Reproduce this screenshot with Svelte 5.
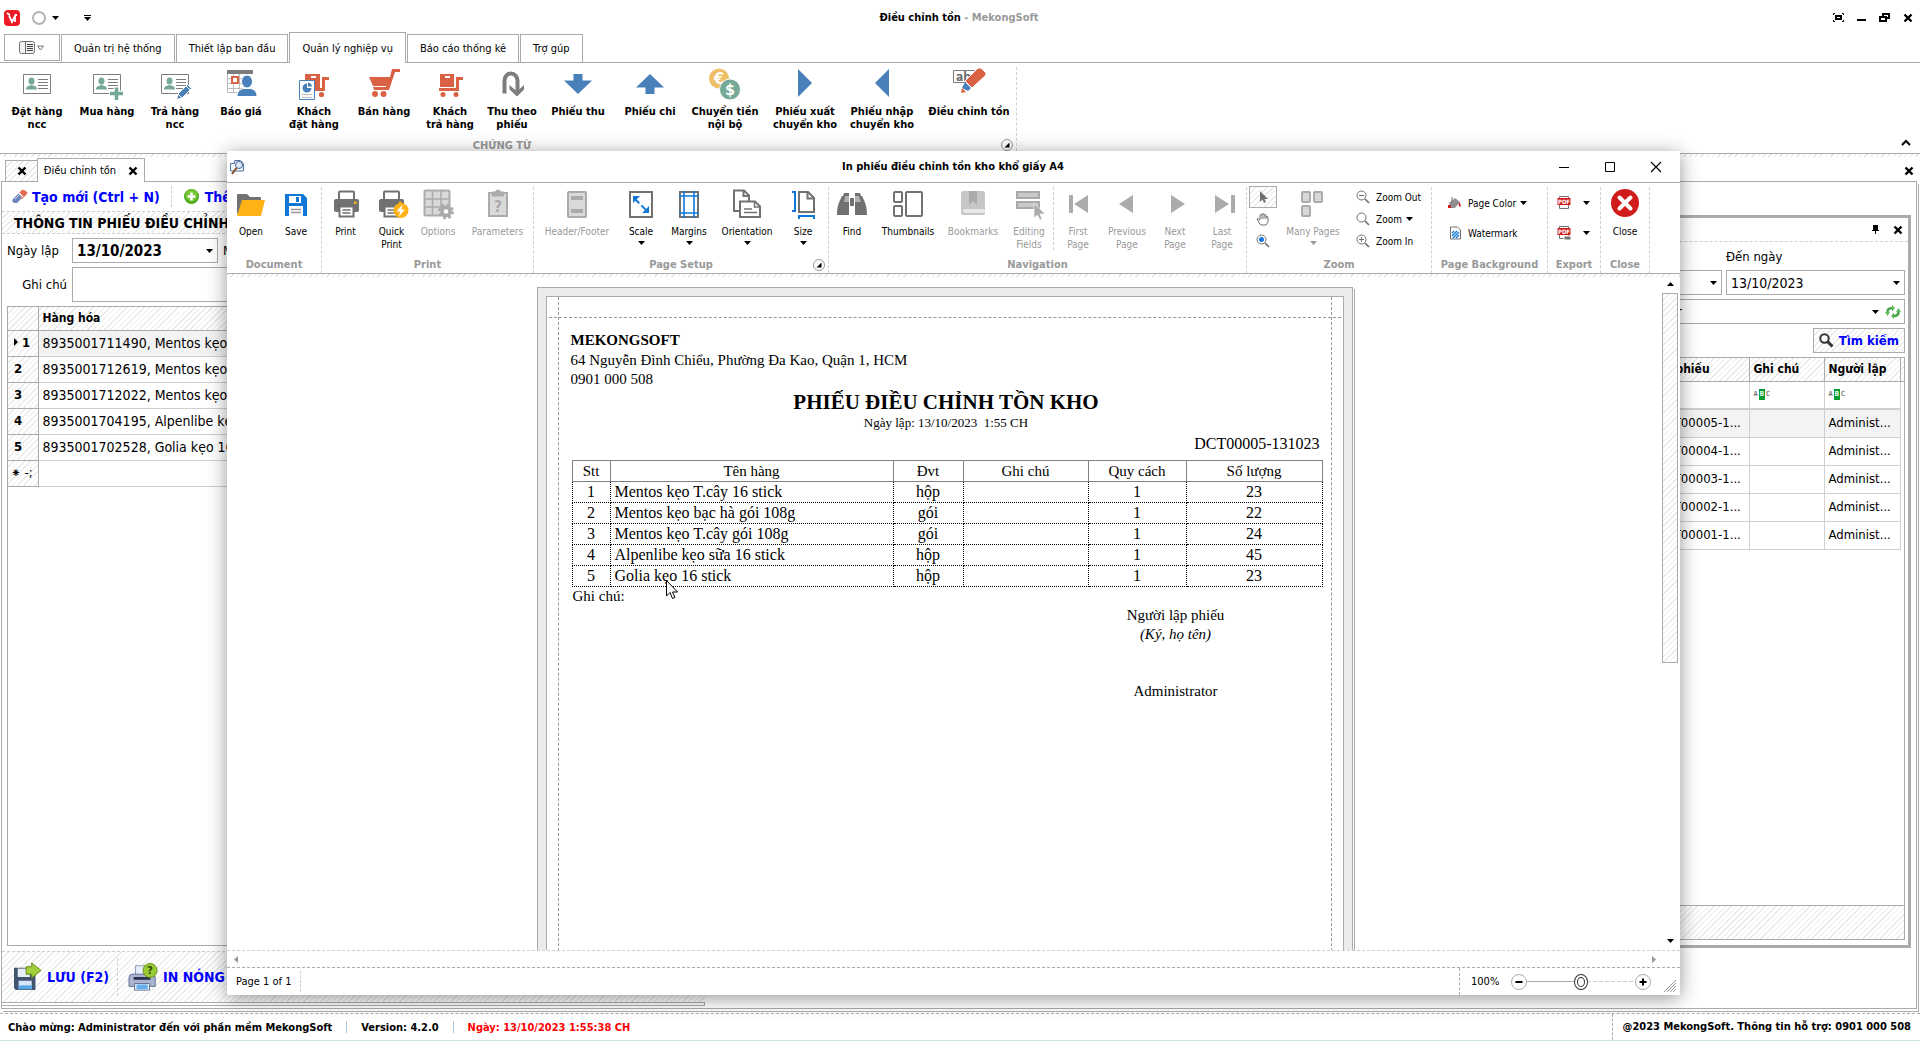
<script>
  const menuTabs = ['Quản trị hệ thống', 'Thiết lập ban đầu', 'Quản lý nghiệp vụ', 'Báo cáo thống kê', 'Trợ gúp'];
  const commands = [
    { icon: 'card', label: 'Đặt hàng\nncc' },
    { icon: 'cardPlus', label: 'Mua hàng' },
    { icon: 'cardPen', label: 'Trả hàng\nncc' },
    { icon: 'quote', label: 'Báo giá' },
    { icon: 'order', label: 'Khách\nđặt hàng' },
    { icon: 'cart', label: 'Bán hàng' },
    { icon: 'trolley', label: 'Khách\ntrả hàng' },
    { icon: 'uturn', label: 'Thu theo\nphiếu' },
    { icon: 'down', label: 'Phiếu thu' },
    { icon: 'up', label: 'Phiếu chi' },
    { icon: 'coins', label: 'Chuyển tiền\nnội bộ' },
    { icon: 'right', label: 'Phiếu xuất\nchuyển kho' },
    { icon: 'left', label: 'Phiếu nhập\nchuyển kho' },
    { icon: 'marker', label: 'Điều chỉnh tồn' }
  ];
  const products = [
    '8935001711490, Mentos kẹo T.cây 16 stick',
    '8935001712619, Mentos kẹo bạc hà gói 108g',
    '8935001712022, Mentos kẹo T.cây gói 108g',
    '8935001704195, Alpenlibe kẹo sữa 16 stick',
    '8935001702528, Golia kẹo 16 stick'
  ];
  const slips = ['DCT00005-1...', 'DCT00004-1...', 'DCT00003-1...', 'DCT00002-1...', 'DCT00001-1...'];
  const lines = [
    ['Mentos kẹo T.cây 16 stick', 'hộp', 23],
    ['Mentos kẹo bạc hà gói 108g', 'gói', 22],
    ['Mentos kẹo T.cây gói 108g', 'gói', 24],
    ['Alpenlibe kẹo sữa 16 stick', 'hộp', 45],
    ['Golia kẹo 16 stick', 'hộp', 23]
  ];
  const documentTools = [{ icon: 'open', label: 'Open' }, { icon: 'save', label: 'Save' }];
  const printTools = [
    { icon: 'print', label: 'Print' },
    { icon: 'quickPrint', label: 'Quick\nPrint' },
    { icon: 'options', label: 'Options', off: true },
    { icon: 'parameters', label: 'Parameters', off: true }
  ];
  const setupTools = [
    { icon: 'headerFooter', label: 'Header/Footer', off: true },
    { icon: 'scale', label: 'Scale', drop: true },
    { icon: 'margins', label: 'Margins', drop: true },
    { icon: 'orientation', label: 'Orientation', drop: true },
    { icon: 'size', label: 'Size', drop: true }
  ];
  const findTools = [
    { icon: 'find', label: 'Find' },
    { icon: 'thumbnails', label: 'Thumbnails' },
    { icon: 'bookmarks', label: 'Bookmarks', off: true },
    { icon: 'editing', label: 'Editing\nFields', off: true }
  ];
  const pageTools = [
    { icon: 'first', label: 'First\nPage', off: true },
    { icon: 'previous', label: 'Previous\nPage', off: true },
    { icon: 'next', label: 'Next\nPage', off: true },
    { icon: 'last', label: 'Last\nPage', off: true }
  ];
  let zoom = $state(50);
</script>

{#snippet caret()}
  <svg class="caret" width="7" height="4" viewBox="0 0 7 4"><path d="M0 0h7L3.500 4z" fill="currentColor" /></svg>
{/snippet}

{#snippet cross()}
  <svg width="10" height="8" viewBox="0 0 10 8"><path d="M1.500 .500l7 7M8.500 .500l-7 7" stroke="#000" stroke-width="2.400" /></svg>
{/snippet}

{#snippet cardBase()}
  <path d="M2.500 6.500h27v19h-27z" fill="#fff" stroke="#7d7d7d" />
  <g fill="#75a895"><ellipse cx="10.500" cy="13" rx="3" ry="3.500" /><path d="M5 21.500c0-3 2-3.500 5.500-4.500 3.500 1 5.500 1.500 5.500 4.500z" /></g>
  <path d="M17 11.500h10M17 14.500h10M17 17.500h10M17 20.500h10" stroke="#7d7d7d" />
{/snippet}

{#snippet printer()}
  <path d="M6 11V3.500q0-1 1-1h13q1 0 1 1V11" fill="#fff" stroke="#717171" stroke-width="2" />
  <rect x="1" y="10" width="25" height="13" rx="2" fill="#717171" /><rect x="21" y="12.500" width="2.500" height="2.500" fill="#ffb115" />
  <path d="M6.500 17.500h14v10h-14z" fill="#fff" stroke="#717171" stroke-width="2" /><path d="M9.500 21h8M9.500 24h8" stroke="#717171" stroke-width="1.300" />
{/snippet}

{#snippet glass()}
  <circle cx="5.500" cy="5.500" r="4.500" fill="none" stroke="#717171" /><path d="M9 9l4 4" stroke="#717171" stroke-width="1.700" />
{/snippet}

{#snippet icon(name)}
  <svg class="icon" width="32" height="32" viewBox="0 0 32 32" aria-hidden="true">
    {#if name === 'card'}
      {@render cardBase()}
    {:else if name === 'cardPlus'}
      {@render cardBase()}<path d="M25.500 18v14M18 25.500h14" stroke="#fff" stroke-width="6" /><path d="M25.500 19.500V32M19 25.500h13" stroke="#75a895" stroke-width="3.600" />
    {:else if name === 'cardPen'}
      {@render cardBase()}<path d="M17.500 31.500l1.500-5.500L28.500 16.500l4 4L23 30z" fill="#4a80b9" stroke="#fff" /><path d="M27 18l4 4M19 26l4 4" stroke="#fff" />
    {:else if name === 'quote'}
      <path d="M2 2h26v4H2z" fill="#7d7d7d" /><path d="M2.500 6v18.500H27M2 10.500h25M2 15.500h25M2 20.500h25M8.500 6v18M14.500 6v18M21.500 6v18" fill="none" stroke="#bbb" />
      <path d="M7 9h6v6H7z" fill="#fff" stroke="#d96245" stroke-width="2" /><g fill="#4a80b9"><path d="M12 28.500c0-6 4-7 6-8h8c2 1 6 2 6 8z" stroke="#fff" /><ellipse cx="22" cy="13.500" rx="5.500" ry="6.500" stroke="#fff" /></g>
    {:else if name === 'order'}
      <path d="M7 6h15v14H7z" fill="#d96245" /><path d="M13 9h5" stroke="#fff" stroke-width="2" /><path d="M31 10.500h-5.500v11H14" fill="none" stroke="#d96245" stroke-width="3" /><circle cx="23.500" cy="26.500" r="2.600" fill="#d96245" />
      <path d="M1.500 12.500h15v19h-15z" fill="#fff" stroke="#4a80b9" /><path d="M9 15.500a4.500 4.500 0 1 0 4.500 4.500H9z" fill="#4a80b9" /><path d="M10 14.500a4.500 4.500 0 0 1 4 4h-4z" fill="#4a80b9" /><path d="M4 26.500h10M4 29.500h10" stroke="#bbb" />
    {:else if name === 'cart'}
      <path d="M1 9h21l2-8h8v3h-5l-6 18H6L5 19h13v-1H5z" fill="#d96245" /><circle cx="7" cy="26" r="3" fill="#d96245" /><circle cx="15.500" cy="26" r="3" fill="#d96245" />
    {:else if name === 'trolley'}
      <path d="M6 6h14v13H6z" fill="#d96245" /><path d="M11 9h5" stroke="#fff" stroke-width="2" /><path d="M29 10.500h-5.500v11H5" fill="none" stroke="#d96245" stroke-width="3" /><circle cx="9" cy="26.500" r="2.500" fill="#d96245" /><circle cx="22" cy="26.500" r="2.500" fill="#d96245" />
    {:else if name === 'uturn'}
      <path d="M8.500 25.500v-13a6.500 7 0 0 1 13 0V24" fill="none" stroke="#7d7d7d" stroke-width="4" /><path d="M13.500 17v4.500l7.500 7 7-7V17l-7 6.500z" fill="#7d7d7d" />
    {:else if name === 'down'}
      <path d="M11.500 6h9v6.500H30L16 26 2 12.500h9.500z" fill="#4a80b9" />
    {:else if name === 'up'}
      <path d="M16 6l14 13.500h-9.500V26h-9v-6.500H2z" fill="#4a80b9" />
    {:else if name === 'coins'}
      <circle cx="10" cy="10.500" r="10" fill="#eebf67" /><text x="10" y="16" text-anchor="middle" font-size="16" font-weight="bold" fill="#fff">€</text>
      <circle cx="21" cy="21.500" r="10.500" fill="#75a895" stroke="#fff" /><text x="21" y="27" text-anchor="middle" font-size="16" font-weight="bold" fill="#fff">$</text>
    {:else if name === 'right'}
      <path d="M9 1l14 14L9 29z" fill="#4a80b9" />
    {:else if name === 'left'}
      <path d="M23 1L9 15l14 14z" fill="#4a80b9" />
    {:else if name === 'marker'}
      <path d="M.500 2.500h21v12H.500z" fill="#fff" stroke="#7d7d7d" /><text x="3" y="13" font-size="12" fill="#6d6d6d">ab</text>
      <path d="M12 13L25 0h3l5 5v2L19 20z" fill="#d96245" stroke="#fff" /><path d="M12 14l6 6-3 3-6-3z" fill="#4a80b9" /><path d="M9 20l4 4-5 1z" fill="#d96245" />
    {:else if name === 'open'}
      <path d="M2 24V6q0-1 1-1h9l3 3h10q1 0 1 1v4H7L4 26z" fill="#717171" /><path d="M7 11h23l-4 16H2z" fill="#ffb115" />
    {:else if name === 'save'}
      <path d="M5 5h18l4 4v18H5z" fill="#1177d7" /><path d="M9 7h12v7H9zM9 17h14v10H9z" fill="#fff" /><path d="M16 8h3v5h-3z" fill="#1177d7" /><path d="M11 20.500h10M11 23.500h10" stroke="#9a9a9a" stroke-width="1.500" />
    {:else if name === 'print'}
      <g transform="translate(3)">{@render printer()}</g>
    {:else if name === 'quickPrint'}
      <g transform="translate(2)">{@render printer()}</g><circle cx="25" cy="21.500" r="7.500" fill="#ffb115" /><path d="M26.500 15.500l-6 7h3.500l-1 5 6-7h-3.500z" fill="#fff" />
    {:else if name === 'options'}
      <rect x="2.500" y="1.500" width="25" height="25" rx="1" fill="#d9d9d9" stroke="#ababab" stroke-width="2" /><path d="M10.500 2v24M19 2v24M3 10h24M3 18h24" stroke="#ababab" stroke-width="1.500" />
      <circle cx="24" cy="22.500" r="6" fill="#ababab" /><circle cx="24" cy="22.500" r="6.500" fill="none" stroke="#ababab" stroke-width="3" stroke-dasharray="2.600 2.500" /><circle cx="24" cy="22.500" r="2.300" fill="#fff" />
    {:else if name === 'parameters'}
      <rect x="7" y="4" width="18" height="23" fill="#d9d9d9" stroke="#ababab" stroke-width="2" /><path d="M10 2.500h3q3-4 6 0h3v5H10z" fill="#ababab" /><text x="16" y="23" text-anchor="middle" font-size="16" font-weight="bold" fill="#ababab">?</text>
    {:else if name === 'headerFooter'}
      <rect x="7" y="3" width="18" height="25" rx="1" fill="#d9d9d9" stroke="#ababab" stroke-width="2" /><path d="M10 7h12v4H10zM10 20h12v4H10z" fill="#ababab" />
    {:else if name === 'scale'}
      <rect x="5" y="3" width="22" height="25" fill="#fff" stroke="#717171" stroke-width="2" /><path d="M10 10l12 12" stroke="#1177d7" stroke-width="2" stroke-dasharray="6 3" /><path d="M8 7h7l-7 7zM24 24h-7l7-7z" fill="#1177d7" />
    {:else if name === 'margins'}
      <rect x="7" y="3" width="18" height="25" fill="#fff" stroke="#717171" stroke-width="2" /><path d="M11 2v27M21 2v27M6 7h20M6 24h20" stroke="#1177d7" stroke-width="1.600" />
    {:else if name === 'orientation'}
      <path d="M3 1.500h10l5 5V22H3z" fill="#fff" stroke="#717171" stroke-width="2" /><path d="M12.500 1.500V7H18" fill="none" stroke="#717171" stroke-width="2" /><path d="M9 12.500h15l5 5V28H9z" fill="#fff" stroke="#717171" stroke-width="2" /><path d="M23.500 13v5H29M13 20h8M13 23.500h13" fill="none" stroke="#717171" stroke-width="1.500" />
    {:else if name === 'size'}
      <path d="M12 3h9l6 6v14H12z" fill="#fff" stroke="#717171" stroke-width="2" /><path d="M20.500 3v6.500H27" fill="none" stroke="#717171" stroke-width="2" /><path d="M5 3h3v19H5M12 30v-3h15v3" fill="none" stroke="#1177d7" stroke-width="2" />
    {:else if name === 'find'}
      <path d="M1 26C1 15 4 12 6 7h7v19zM31 26C31 15 28 12 26 7h-7v19z" fill="#717171" /><path d="M8 4h5v3H7zM19 4h5l1 3h-6z" fill="#717171" /><path d="M9 7h4v6H8zM19 7h4l2 6h-6z" fill="#b0b0b0" /><path d="M14 9h4v8h-4z" fill="#717171" />
    {:else if name === 'thumbnails'}
      <g fill="#fff" stroke="#717171" stroke-width="2"><rect x="2" y="3" width="8" height="10" rx="1" /><rect x="2" y="17" width="8" height="10" rx="1" /><rect x="14" y="3" width="16" height="24" rx="1" /></g>
    {:else if name === 'bookmarks'}
      <rect x="4" y="2" width="24" height="24" rx="2" fill="#c6c6c6" /><path d="M12 2h8v14l-4-4-4 4z" fill="#ababab" /><rect x="6" y="20" width="22" height="4" rx="2" fill="#e8e8e8" />
    {:else if name === 'editing'}
      <path d="M4 3h22v6H4zM4 13h22v6H4z" fill="#c9c9c9" stroke="#ababab" stroke-width="2" /><path d="M21 14v15l3.500-3 2.500 5 2-1-2-5h5z" fill="#ababab" stroke="#fff" stroke-width=".6" />
    {:else if name === 'first'}
      <rect x="7" y="6" width="4" height="18" rx="1" fill="#ababab" /><path d="M26 6v18L12 15z" fill="#ababab" />
    {:else if name === 'previous'}
      <path d="M22 6v18L8 15z" fill="#ababab" />
    {:else if name === 'next'}
      <path d="M12 6v18l14-9z" fill="#ababab" />
    {:else if name === 'last'}
      <path d="M9 6v18l14-9z" fill="#ababab" /><rect x="25" y="6" width="4" height="18" rx="1" fill="#ababab" />
    {:else if name === 'manyPages'}
      <g fill="#d9d9d9" stroke="#ababab" stroke-width="2"><rect x="5" y="3" width="8" height="10" rx="1" /><rect x="17" y="3" width="8" height="10" rx="1" /><rect x="5" y="17" width="8" height="10" rx="1" /></g>
    {:else if name === 'close'}
      <circle cx="16" cy="14" r="14" fill="#d11c1c" /><path d="M10.500 8.500l11 11M21.500 8.500l-11 11" stroke="#fff" stroke-width="4" stroke-linecap="round" />
    {/if}
  </svg>
{/snippet}

{#snippet tool(item)}
  <button class="tool" disabled={item.off}>
    {@render icon(item.icon)}
    <span>{item.label}</span>
    {#if item.drop}{@render caret()}{/if}
  </button>
{/snippet}

{#snippet launcher()}
  <button class="launcher" aria-label="Mở rộng"><svg width="12" height="12" viewBox="0 0 12 12"><circle cx="6" cy="6" r="5.500" fill="#fff" stroke="#999" /><path d="M8.500 3.500v5h-5z" fill="#000" /></svg></button>
{/snippet}

<div class="app">
  <header class="titlebar">
    <svg width="16" height="16" viewBox="0 0 16 16"><rect width="16" height="16" rx="4" fill="#ec1c24" /><path d="M3 3l3 2M5 5.500l3 6.500 3.500-7h1.500M11 6v6" fill="none" stroke="#fff" stroke-width="1.800" /></svg>
    <button class="orb" aria-label="Giao diện"><svg width="14" height="14" viewBox="0 0 14 14"><circle cx="7" cy="7" r="6" fill="none" stroke="#b4b4b4" stroke-width="2" /></svg>{@render caret()}</button>
    <button class="quick" aria-label="Tùy chỉnh"><svg width="7" height="6" viewBox="0 0 7 6"><path d="M0 0h7v1H0zM0 2h7L3.500 6z" /></svg></button>
    <h1>Điều chỉnh tồn <span>- MekongSoft</span></h1>
    <div class="wincontrols">
      <button aria-label="Toàn màn hình"><svg width="11" height="9" viewBox="0 0 11 9"><path d="M2 .5H.5V2M.5 7v1.500H2M9 .5h1.500V2M10.500 7v1.500H9" fill="none" stroke="#000" /><path d="M3 3h5v3H3z" fill="none" stroke="#000" stroke-width="2" /></svg></button>
      <button aria-label="Thu nhỏ"><svg width="9" height="9" viewBox="0 0 9 9"><path d="M0 6h9v2H0z" /></svg></button>
      <button aria-label="Khôi phục"><svg width="11" height="9" viewBox="0 0 11 9"><path d="M4 3V1h6v4H7M1 4h6v4H1z" fill="none" stroke="#000" stroke-width="2" /></svg></button>
      <button aria-label="Đóng">{@render cross()}</button>
    </div>
  </header>

  <nav class="menu">
    <button class="appmenu" aria-label="Menu"><svg width="26" height="13" viewBox="0 0 26 13"><rect x=".5" y=".5" width="15" height="12" rx="2" fill="#f2f2f2" stroke="#717171" /><path d="M6.500 1v11" stroke="#717171" /><path d="M8 3.500h6M8 5.500h6M8 7.500h6M8 9.500h6" stroke="#444" /><path d="M18.500 5h6l-3 4z" fill="#fff" stroke="#717171" /></svg></button>
    {#each menuTabs as tab, i}
      <button class:active={i === 2}>{tab}</button>
    {/each}
  </nav>

  <section class="ribbon">
    <div class="commands">
      <div class="row">
        {#each commands as item}{@render tool(item)}{/each}
      </div>
      <h2>CHỨNG TỪ</h2>
      {@render launcher()}
    </div>
    <button class="collapse" aria-label="Thu gọn"><svg width="10" height="6" viewBox="0 0 10 6"><path d="M1 5l4-4 4 4" fill="none" stroke="#000" stroke-width="2" /></svg></button>
  </section>

  <main class="mdi">
    <div class="doctabs">
      <button class="hatch" aria-label="Đóng">{@render cross()}</button>
      <button class="active"><span>Điều chỉnh tồn</span>{@render cross()}</button>
      <button class="closeall" aria-label="Đóng tất cả">{@render cross()}</button>
    </div>
    <div class="frame">
      <section class="editor">
        <div class="toolbar">
          <button>
            <svg width="16" height="14" viewBox="0 0 16 14"><path d="M1 9l6-6 4 4-6 6H2L0 11z" fill="#6c88b8" /><path d="M7 3l3-3q1-.5 2 0l3 2q1 1 0 2l-5 5z" fill="#e4674f" /><path d="M7 3l4 4" stroke="#fff" stroke-width="1.500" /><path d="M3 9l5-5" stroke="#c8d6ec" /></svg>
            Tạo mới (Ctrl + N)
          </button>
          <button class="add">
            <svg width="15" height="15" viewBox="0 0 15 15"><circle cx="7.500" cy="7.500" r="7.500" fill="#4fa91c" /><circle cx="7.500" cy="6.500" r="6" fill="#76c733" /><path d="M7.500 3.500v8M3.500 7.500h8" stroke="#fff" stroke-width="2.600" /></svg>
            Thêm hàng hóa
          </button>
        </div>
        <h2 class="hatch">THÔNG TIN PHIẾU ĐIỀU CHỈNH</h2>
        <div class="fields">
          <label for="ngay">Ngày lập</label>
          <div class="combo bold"><input id="ngay" value="13/10/2023" /><button aria-label="Chọn ngày">{@render caret()}</button></div>
          <label for="ma">Mã phiếu</label>
          <input id="ma" />
          <label class="right" for="ghichu">Ghi chú</label>
          <textarea id="ghichu"></textarea>
        </div>
        <div class="gridbox">
          <table class="goods">
            <thead><tr class="hatch"><th></th><th>Hàng hóa</th></tr></thead>
            <tbody>
              {#each products as product, i}
                <tr class:current={i === 0}><th class="hatch">{#if i === 0}<svg width="4" height="8" viewBox="0 0 4 8"><path d="M0 0l4 4-4 4z" /></svg>{/if}{i + 1}</th><td>{product}</td></tr>
              {/each}
              <tr class="new"><th class="hatch">⁕ -;</th><td></td></tr>
            </tbody>
          </table>
        </div>
        <div class="actions hatch">
          <button>
            <svg width="28" height="30" viewBox="0 0 30 30"><path d="M0 5h21l2 2v22H2l-2-2z" fill="#42546f" /><path d="M4 6h13v9H4z" fill="#e9eef6" /><path d="M5 19h14v9H5z" fill="#d6e6f8" /><path d="M5 24h14v4H5z" fill="#58a5e6" /><path d="M13 7V4h6V0l10 8-10 8v-4h-6z" fill="#a5cf3a" stroke="#638a10" /></svg>
            LƯU (F2)
          </button>
          <button class="split">
            <svg width="29" height="30" viewBox="0 0 31 30"><path d="M7 3h14v12H7z" fill="#e8eefb" stroke="#8895b5" /><path d="M3 12h22q3 0 3 4v9H0v-9q0-4 3-4z" fill="#aab4d0" stroke="#5c688d" /><path d="M5 15h18v3H5z" fill="#26304d" /><path d="M6 22h16v7H6z" fill="#eff7ff" stroke="#5c688d" /><path d="M8 23h12v5H8z" fill="#64aeec" /><circle cx="22.500" cy="8" r="7.500" fill="#98ca35" stroke="#668f15" /><text x="22.500" y="12" text-anchor="middle" font-size="12" font-weight="bold" fill="#304605">?</text></svg>
            IN NÓNG
          </button>
        </div>
        <div class="scroller"></div>
      </section>

      <aside class="search">
        <header>
          <button aria-label="Ghim"><svg width="7" height="9" viewBox="0 0 7 9"><path d="M1 0h5v5h1v1H4v3H3V6H0V5h1z" /></svg></button>
          <button aria-label="Đóng">{@render cross()}</button>
        </header>
        <div class="filters">
          <label class="to" for="den">Đến ngày</label>
          <div class="combo"><input aria-label="Từ ngày" value="13/10/2023" /><button aria-label="Chọn ngày">{@render caret()}</button></div>
          <div class="combo"><input id="den" value="13/10/2023" /><button aria-label="Chọn ngày">{@render caret()}</button></div>
          <div class="combo user">
            <select aria-label="Người lập"><option>Administrator</option></select>
            {@render caret()}
            <button aria-label="Làm mới"><svg width="16" height="14" viewBox="0 0 16 14"><path d="M2.500 8Q2 3 7.500 3M13.500 6Q14 11 8.500 11" fill="none" stroke="#47a447" stroke-width="2.600" /><path d="M7 0l3 3-3 3.500zM9 14l-3-3 3-3.500zM0 7h5L2.500 11zM16 7h-5l2.500-4z" fill="#5cb85c" /></svg></button>
          </div>
          <button class="go hatch"><svg width="15" height="15" viewBox="0 0 15 15"><circle cx="5.500" cy="5.500" r="4.200" fill="#fff" stroke="#333" stroke-width="2" /><path d="M8.500 8.500l5 5" stroke="#333" stroke-width="3" /></svg>Tìm kiếm</button>
        </div>
        <div class="gridbox">
          <table class="slips">
            <thead>
              <tr class="hatch"><th>Ngày lập</th><th>Số phiếu</th><th>Ghi chú</th><th>Người lập</th><th></th></tr>
            </thead>
            <tbody>
              <tr class="filter">
                <td></td><td></td>
                {#each [1, 2] as n (n)}
                  <td><span class="abc">A<b>B</b>C</span></td>
                {/each}
              </tr>
              {#each slips as slip, i}
                <tr class:current={i === 0}><td>13/10/2023</td><td>{slip}</td><td></td><td>Administ...</td></tr>
              {/each}
            </tbody>
          </table>
          <div class="foot hatch"></div>
        </div>
      </aside>
    </div>
  </main>

  <footer class="status">
    <span>Chào mừng: Administrator đến với phần mềm MekongSoft</span>
    <i></i><span>Version: 4.2.0</span>
    <i></i><span class="red">Ngày: 13/10/2023 1:55:38 CH</span>
    <span class="support">@2023 MekongSoft. Thông tin hỗ trợ: 0901 000 508</span>
  </footer>

  <section class="dialog" role="dialog" aria-label="In phiếu điều chỉnh tồn kho khổ giấy A4">
    <header>
      <svg width="15" height="16" viewBox="0 0 15 16"><path d="M.5 4.500h4v-3h6l3 3V12H.5z" fill="#f2f6fc" stroke="#4f74a8" /><circle cx="9" cy="6" r="3.500" fill="#dcebfa" stroke="#4a6488" /><path d="M6.500 9L2 15" stroke="#8a4a1c" stroke-width="2" /></svg>
      <h2>In phiếu điều chỉnh tồn kho khổ giấy A4</h2>
      <div class="wincontrols">
        <button aria-label="Thu nhỏ"><svg width="10" height="10" viewBox="0 0 10 10"><path d="M0 5.500h10" stroke="#000" /></svg></button>
        <button aria-label="Phóng to"><svg width="10" height="10" viewBox="0 0 10 10"><path d="M.5.5h9v9h-9z" fill="none" stroke="#000" /></svg></button>
        <button aria-label="Đóng"><svg width="10" height="10" viewBox="0 0 10 10"><path d="M0 0l10 10M10 0L0 10" stroke="#000" stroke-width="1.200" /></svg></button>
      </div>
    </header>

    <div class="preview-ribbon">
      <div class="group g-doc"><div class="row">{#each documentTools as item}{@render tool(item)}{/each}</div><h3>Document</h3></div>
      <div class="group g-print"><div class="row">{#each printTools as item}{@render tool(item)}{/each}</div><h3>Print</h3></div>
      <div class="group g-setup"><div class="row">{#each setupTools as item}{@render tool(item)}{/each}</div><h3>Page Setup</h3>{@render launcher()}</div>
      <div class="group g-nav">
        <div class="pair">
          <div class="row find">{#each findTools as item}{@render tool(item)}{/each}</div>
          <div class="row pages">{#each pageTools as item}{@render tool(item)}{/each}</div>
        </div>
        <h3>Navigation</h3>
      </div>
      <div class="group g-zoom">
        <div class="pair">
          <div class="stack modes">
            <button class="on hatch" aria-label="Con trỏ"><svg width="14" height="14" viewBox="0 0 14 14"><path d="M4 1v11l2.500-2.500L8 13l2-1-1.500-3H12z" fill="#717171" /></svg></button>
            <button aria-label="Kéo trang"><svg width="14" height="14" viewBox="0 0 14 14"><path d="M4 12L1 7q1-1 3 1V3q1-1 2 0V2q1-1 2 0v1q1-1 2 0v2q1-1 2 0v5l-2 3H5z" fill="#fff" stroke="#717171" /><path d="M6 3v4M8 3v4M10 4v3" stroke="#717171" /></svg></button>
            <button aria-label="Phóng vùng"><svg width="14" height="14" viewBox="0 0 14 14">{@render glass()}<circle cx="5.500" cy="5.500" r="2.500" fill="#1177d7" /></svg></button>
          </div>
          {@render tool({ icon: 'manyPages', label: 'Many Pages', off: true, drop: true })}
          <div class="stack">
            <button><svg width="14" height="14" viewBox="0 0 14 14">{@render glass()}<path d="M3 5.500h5" stroke="#717171" /></svg>Zoom Out</button>
            <button><svg width="14" height="14" viewBox="0 0 14 14">{@render glass()}</svg>Zoom {@render caret()}</button>
            <button><svg width="14" height="14" viewBox="0 0 14 14">{@render glass()}<path d="M3 5.500h5M5.500 3v5" stroke="#717171" /></svg>Zoom In</button>
          </div>
        </div>
        <h3>Zoom</h3>
      </div>
      <div class="group g-bg">
        <div class="stack two">
          <button><svg width="14" height="14" viewBox="0 0 14 14"><path d="M1 7l6-5 5 4-5 6H3z" fill="#909090" /><path d="M4 1v6" stroke="#717171" /><path d="M0 9h3v3H0zM11 6q3 4 1 5-2-1-1-5z" fill="#d11c1c" /></svg>Page Color {@render caret()}</button>
          <button><svg width="14" height="14" viewBox="0 0 14 14"><path d="M2.500 1h7l3 3v9h-10z" fill="#fff" stroke="#717171" /><path d="M4 10l5-5M5 12l6-6M4 7l2-2M8 12l3-3" stroke="#1177d7" stroke-width="1.400" /></svg>Watermark</button>
        </div>
        <h3>Page Background</h3>
      </div>
      <div class="group g-export">
        <div class="stack two">
          {#each ['PDF', 'PDF qua email'] as target, i}
            <button aria-label={target}><svg width="14" height="14" viewBox="0 0 14 14"><path d="M2.500.500h9v12h-9z" fill="#fff" stroke="#717171" /><path d="M.5 2h13v7H.5z" fill="#d11c1c" /><text x="7" y="8" text-anchor="middle" font-size="6" font-weight="bold" fill="#fff">PDF</text>{#if i}<path d="M7 10h7v4H7z" fill="#717171" stroke="#fff" />{/if}</svg>{@render caret()}</button>
          {/each}
        </div>
        <h3>Export</h3>
      </div>
      <div class="group g-close"><div class="row">{@render tool({ icon: 'close', label: 'Close' })}</div><h3>Close</h3></div>
    </div>

    <div class="viewport">
      <div class="canvas">
        <div class="sheet">
          <article class="paper">
            <p class="company">MEKONGSOFT</p>
            <p>64 Nguyễn Đình Chiểu, Phường Đa Kao, Quận 1, HCM</p>
            <p>0901 000 508</p>
            <h2>PHIẾU ĐIỀU CHỈNH TỒN KHO</h2>
            <p class="issued">Ngày lập: 13/10/2023 &nbsp;1:55 CH</p>
            <p class="code">DCT00005-131023</p>
            <table>
              <colgroup><col class="c1" /><col /><col class="c3" /><col class="c4" /><col class="c5" /><col class="c6" /></colgroup>
              <thead><tr><th>Stt</th><th>Tên hàng</th><th>Đvt</th><th>Ghi chú</th><th>Quy cách</th><th>Số lượng</th></tr></thead>
              <tbody>
                {#each lines as [name, unit, qty], i}
                  <tr><td>{i + 1}</td><td class="name">{name}</td><td>{unit}</td><td></td><td>1</td><td>{qty}</td></tr>
                {/each}
              </tbody>
            </table>
            <p class="note">Ghi chú:</p>
            <div class="sign"><p>Người lập phiếu</p><p><em>(Ký, họ tên)</em></p><p class="who">Administrator</p></div>
            <svg class="pointer" width="12" height="19" viewBox="0 0 12 19"><path d="M.5.500v15.500l3.500-3.500 2.500 6 2.500-1-2.500-5.500h5z" fill="#fff" stroke="#000" /></svg>
          </article>
        </div>
      </div>
      <div class="vscroll"><svg width="7" height="4" viewBox="0 0 7 4"><path d="M0 4h7L3.500 0z" /></svg><div class="thumb hatch"></div>{@render caret()}</div>
    </div>
    <div class="hscroll"><svg width="4" height="7" viewBox="0 0 4 7"><path d="M4 0v7L0 3.500z" fill="#999" /></svg><svg width="4" height="7" viewBox="0 0 4 7"><path d="M0 0v7l4-3.500z" fill="#999" /></svg></div>
    <footer>
      <span class="pageno">Page 1 of 1</span>
      <div class="zoombar">
        <label for="zoom">100%</label>
        <button aria-label="Thu nhỏ trang"><svg width="16" height="16" viewBox="0 0 16 16"><circle cx="8" cy="8" r="7.500" fill="#fff" stroke="#ababab" /><path d="M4.500 8h7" stroke="#000" stroke-width="2" /></svg></button>
        <input id="zoom" type="range" bind:value={zoom} />
        <button aria-label="Phóng to trang"><svg width="16" height="16" viewBox="0 0 16 16"><circle cx="8" cy="8" r="7.500" fill="#fff" stroke="#ababab" /><path d="M4.500 8h7M8 4.500v7" stroke="#000" stroke-width="2" /></svg></button>
        <svg width="12" height="12" viewBox="0 0 12 12"><path d="M0 12L12 0M3 12l9-9M6 12l6-6M9 12l3-3" stroke="#999" /></svg>
      </div>
    </footer>
  </section>
</div>

<style>
  :global(body) { margin: 0; background: #fff; }
  .app { --line: #ababab; --soft: #cfcfcf; position: relative; min-height: 100vh; display: flex; flex-direction: column; overflow: hidden; background: #fff; color: #000; font: 11px/13px "DejaVu Sans Condensed", "DejaVu Sans", sans-serif; }
  .app *, .app *::before { box-sizing: border-box; }
  button, input, select, textarea { font: inherit; color: inherit; background: transparent; border: 0; border-radius: 0; padding: 0; margin: 0; outline: 0; min-width: 0; }
  h1, h2, h3, p { margin: 0; font-size: inherit; }
  svg { display: block; flex: none; overflow: visible; }
  table { border-collapse: collapse; table-layout: fixed; }
  .hatch { background-image: repeating-linear-gradient(135deg, #e9e9e9 0 1px, transparent 1px 4px); }

  .titlebar { display: flex; align-items: center; height: 32px; padding: 3px 7px 0 4px; }
  .orb { display: flex; align-items: center; gap: 6px; margin-left: 12px; }
  .quick { margin-left: 25px; }
  h1 { flex: 1; text-align: center; font-weight: bold; padding-right: 6px; }
  h1 span { color: #999; }
  .titlebar .wincontrols { display: flex; align-items: center; gap: 13px; }

  .menu { display: flex; align-items: flex-end; gap: 1px; height: 31px; padding-left: 4px; border-bottom: 1px solid var(--line); }
  .menu button { height: 28px; padding: 0 12px; border: 1px solid var(--line); border-bottom: 0; white-space: nowrap; }
  .menu .appmenu { width: 56px; height: 27px; margin-bottom: 1px; padding: 0 14px; border-bottom: 1px solid var(--line); }
  .menu .active { height: 31px; margin-bottom: -1px; background: #fff; }

  .ribbon { display: flex; justify-content: space-between; align-items: flex-end; height: 91px; border-bottom: 1px solid var(--line); }
  .commands { position: relative; align-self: stretch; margin: 4px 0 2px; padding-left: 2px; border-right: 1px dashed var(--soft); }
  .commands .row { display: grid; grid-template-columns: 70px 70px 66px 66px 80px 60px 72px 52px 80px 64px 86px 74px 80px 94px; font-weight: bold; height: 72px; }
  .commands h2 { text-align: center; color: #999; padding-right: 14px; }
  .collapse { margin: 0 9px 7px 0; }
  .launcher { position: absolute; right: 3px; bottom: 0; }
  .row { display: grid; }
  .tool { display: flex; flex-direction: column; align-items: center; padding-top: 1px; }
  .tool span { white-space: pre; text-align: center; margin-top: 4px; line-height: 13px; }
  .commands .tool span { margin-top: 5px; }
  .tool:disabled { color: #999; }
  .tool .caret { margin-top: 3px; }

  .mdi { flex: 1; display: flex; flex-direction: column; padding: 4px 3px 4px 1px; background: repeating-linear-gradient(135deg, #e4e4e4 0 1px, transparent 1px 4px) 0 0 / 100% 3px no-repeat; }
  .doctabs { display: flex; align-items: flex-end; height: 24px; margin-bottom: -1px; padding-left: 4px; position: relative; }
  .doctabs button { display: flex; align-items: center; justify-content: center; height: 22px; width: 33px; border: 1px solid var(--line); }
  .doctabs .active { height: 24px; width: 108px; margin-left: -1px; gap: 12px; border-bottom: 0; background: #fff; }
  .doctabs .closeall { width: 10px; margin-left: auto; margin-right: 3px; border: 0; }
  .frame { flex: 1; display: flex; border: 1px solid var(--line); box-shadow: 1px 2px #fff, 2px 3px var(--line); }

  .editor { flex: 1; min-width: 0; display: flex; flex-direction: column; font-size: 14px; line-height: 18px; padding-bottom: 2px; }
  .toolbar { display: flex; height: 30px; padding-left: 10px; font-size: 14px; border-bottom: 1px dashed var(--soft); }
  .toolbar button { display: flex; align-items: center; gap: 4px; font-weight: bold; color: #00f; white-space: nowrap; }
  .toolbar .add { margin: 4px 0 4px 11px; padding-left: 12px; border-left: 1px dashed var(--soft); gap: 6px; }
  .editor h2 { height: 22px; line-height: 22px; padding-left: 12px; border-bottom: 1px dashed var(--soft); font-size: 14px; white-space: nowrap; overflow: hidden; }
  .fields { display: grid; grid-template-columns: 60px 146px 56px 1fr; grid-template-rows: 25px 35px; column-gap: 5px; row-gap: 4px; align-items: center; padding: 4px 8px 4px 5px; font-size: 13px; }
  .fields .right { text-align: right; }
  .fields textarea, .fields > input { height: 100%; border: 1px solid var(--line); resize: none; }
  .fields textarea { grid-column: 2 / 5; }
  .combo { display: flex; align-items: center; height: 25px; border: 1px solid var(--line); padding: 0 4px; background: #fff; }
  .combo input, .combo select { flex: 1; width: 0; appearance: none; }
  .bold { font-weight: bold; font-size: 15px; }
  .gridbox { flex: 1; border: 1px solid var(--line); }
  .editor .gridbox { margin: 0 5px 5px; }
  .goods { width: 100%; font-size: 14px; }
  .goods th, .goods td { height: 26px; padding: 0 4px; text-align: left; border-bottom: 1px solid var(--soft); white-space: nowrap; }
  .goods thead th { height: 23px; font-size: 12px; border-bottom-color: var(--line); }
  .goods th:first-child { width: 30px; padding-left: 6px; border-right: 1px solid var(--line); border-bottom-color: var(--line); font-size: 13px; }
  .goods th svg { display: inline-block; margin-right: 4px; vertical-align: 1px; }
  .current td { background: #f3f3f3; }
  .goods .new th { font-weight: normal; font-size: 13px; padding: 0 3px; }
  .actions { display: flex; align-items: center; height: 51px; max-width: 703px; padding-left: 12px; border-top: 1px dashed var(--soft); }
  .actions button { display: flex; align-items: center; gap: 5px; font-size: 14px; font-weight: bold; color: #00f; }
  .actions .split { height: 38px; margin-left: 8px; padding-left: 11px; border-left: 1px dashed var(--soft); }
  .scroller { height: 4px; max-width: 703px; border: 1px solid var(--line); border-left: 0; }

  .search { width: 375px; margin: 33px 5px 60px 0; border: 3px solid var(--line); display: flex; flex-direction: column; font-size: 14px; line-height: 18px; }
  .search > header { display: flex; justify-content: flex-end; align-items: center; gap: 14px; height: 24px; padding-right: 5px; border-bottom: 1px dashed var(--soft); }
  .filters { display: grid; grid-template-columns: 1fr 1fr; column-gap: 4px; row-gap: 4px; padding: 6px 3px 4px 4px; font-size: 14px; }
  .filters .to { grid-column: 2; font-size: 13px; }
  .user { grid-column: 1 / 3; margin-left: 48px; gap: 6px; padding-right: 3px; }
  .user button { width: 16px; }
  .go { grid-column: 2; justify-self: end; display: flex; align-items: center; gap: 5px; height: 25px; padding: 0 5px; border: 1px solid var(--line); color: #00f; font-weight: bold; font-size: 13px; }
  .search .gridbox { margin: 0 3px 5px 4px; display: flex; flex-direction: column; justify-content: space-between; }
  .slips { width: 100%; }
  .slips th, .slips td { text-align: left; padding: 0 4px; font-size: 13px; border-right: 1px solid var(--soft); border-bottom: 1px solid var(--soft); white-space: nowrap; }
  .slips th { height: 23px; font-size: 12px; border-color: var(--line); }
  .slips th:nth-child(2) { width: 97px; } .slips th:nth-child(3) { width: 75px; } .slips th:nth-child(4) { width: 76px; } .slips th:nth-child(5) { width: 4px; padding: 0; border-right: 0; }
  .slips td { height: 28px; }
  .slips .filter td { border-bottom: 2px solid var(--soft); }
  .abc { display: flex; align-items: center; font: 7px/9px "DejaVu Sans Mono", monospace; color: #444; }
  .abc b { padding: 1px; margin: 0 1px; background: #009d2f; color: #fff; }
  .foot { height: 34px; border-top: 1px solid var(--line); }

  .status { display: flex; align-items: center; height: 28px; padding: 0 9px 0 8px; border-top: 1px dashed var(--line); border-bottom: 1px solid #cfe4e8; font-weight: bold; white-space: nowrap; }
  .status i { width: 1px; height: 12px; margin: 0 14px; background: #a8c8e0; }
  .red { color: #f00; }
  .support { margin-left: auto; line-height: 26px; padding-left: 10px; border-left: 1px dashed var(--line); }

  .dialog { position: absolute; left: 227px; right: 240px; top: 151px; bottom: 46px; display: flex; flex-direction: column; background: #fff; box-shadow: 0 3px 18px rgba(0, 0, 0, .42); font-size: 10px; }
  .dialog > header { display: flex; align-items: center; height: 32px; padding: 0 19px 0 3px; border-bottom: 1px solid var(--line); font-size: 11px; }
  .dialog > header h2 { flex: 1; text-align: center; padding-left: 102px; }
  .dialog .wincontrols { display: flex; gap: 36px; }
  .preview-ribbon { display: flex; height: 91px; padding-top: 4px; border-bottom: 1px solid var(--line); }
  .group { position: relative; display: flex; flex-direction: column; justify-content: space-between; border-right: 1px dashed var(--soft); }
  .group h3 { text-align: center; color: #999; font-size: 11px; line-height: 16px; }
  .group .tool { padding-top: 2px; }
  .g-doc .row { grid-template-columns: 48px 42px; padding-right: 4px; }
  .g-print .row { grid-template-columns: 47px 45px 48px 71px; }
  .g-setup .row { grid-template-columns: 86px 42px 54px 62px 50px; }
  .g-nav .find { grid-template-columns: 46px 66px 64px 48px; height: 63px; border-right: 1px dashed var(--soft); }
  .g-nav .pages { grid-template-columns: 48px 50px 46px 48px; }
  .pair { display: flex; }
  .stack { display: flex; flex-direction: column; padding-left: 7px; width: 82px; margin-top: -1px; }
  .stack button { display: flex; align-items: center; gap: 6px; height: 22px; white-space: nowrap; }
  .stack .caret { margin-left: -2px; }
  .modes { width: 30px; padding: 0 0 0 2px; }
  .modes button { width: 28px; justify-content: center; }
  .modes .on { border: 1px solid var(--line); }
  .pair > .tool { width: 72px; }
  .stack.two { width: 115px; padding: 2px 0 0 16px; }
  .stack.two button { height: 30px; }
  .g-export .stack.two { width: 52px; padding-left: 9px; }
  .g-export .caret { margin-left: 6px; }
  .g-close .row { grid-template-columns: 48px; }
  .group > .launcher { right: 3px; bottom: 2px; }

  .viewport { flex: 1; min-height: 0; display: flex; background: repeating-linear-gradient(135deg, #e4e4e4 0 1px, transparent 1px 4px) 0 0 / 100% 3px no-repeat; border-bottom: 1px dashed var(--soft); }
  .canvas { flex: 1; display: flex; justify-content: center; padding-top: 13px; padding-left: 1px; overflow: hidden; }
  .sheet { width: 816px; height: 1140px; flex: none; padding: 8px; background: #ebebeb; border: 1px solid var(--line); box-shadow: 1px 1px #fff, 2px 2px var(--line); }
  .paper { position: relative; height: 100%; padding: 33px 21px 0 24px; border: 1px solid var(--line); background: #fff; font: 15px/19px "Liberation Serif", serif; }
  .paper::before { content: ""; position: absolute; inset: 0 11px; border: dashed #999; border-width: 0 1px; }
  .paper::after { content: ""; position: absolute; left: 2px; right: 2px; top: 20px; border-top: 1px dashed #999; }
  .company { font-weight: bold; line-height: 21px; }
  .paper h2 { margin-top: 1px; font-size: 21px; line-height: 25px; text-align: center; }
  .issued { font-size: 13px; line-height: 15px; text-align: center; }
  .code { font-size: 16px; line-height: 22px; padding-right: 2px; margin-top: 3px; text-align: right; }
  .paper table { width: 751px; margin: 5px 0 0 1px; }
  .paper th { height: 21px; padding: 0; border: 1px solid #808080; font-weight: normal; }
  .paper td { height: 21px; padding: 0; font-size: 16px; line-height: 18px; border: 1px dotted #000; text-align: center; }
  .paper .name { text-align: left; padding-left: 4px; }
  .c1 { width: 38px; } .c3 { width: 70px; } .c4 { width: 125px; } .c5 { width: 98px; } .c6 { width: 136px; }
  .note { padding-left: 2px; }
  .sign { width: 200px; margin-left: 505px; text-align: center; }
  .who { margin-top: 38px; }
  .pointer { position: absolute; left: 119px; top: 283px; }
  .vscroll { display: flex; flex-direction: column; align-items: center; width: 18px; margin-right: 1px; padding: 8px 0 7px; }
  .thumb { width: 16px; height: 370px; margin: 7px 0 auto; border: 1px solid var(--line); background-color: #fff; }
  .hscroll { display: flex; justify-content: space-between; align-items: center; height: 16px; padding: 0 24px 0 7px; }
  .dialog > footer { display: flex; justify-content: space-between; align-items: center; height: 28px; border-top: 1px dashed var(--line); }
  .pageno { padding: 4px 9px 4px 9px; border-right: 1px dashed var(--soft); font-size: 11px; }
  .zoombar { display: flex; align-items: center; align-self: stretch; padding: 0 4px 0 11px; border-left: 1px dashed var(--line); }
  .zoombar label { width: 40px; font-size: 11px; }
  .zoombar input { width: 108px; height: 16px; appearance: none; background: linear-gradient(var(--line), var(--line)) left center / 50% 1px no-repeat, repeating-linear-gradient(90deg, #ccc 0 4px, transparent 4px 6px) right center / 50% 1px no-repeat; }
  .zoombar input::-webkit-slider-thumb { appearance: none; width: 14px; height: 16px; border: 4px double #333; border-radius: 50%; background: #fff; }
  .zoombar > svg { margin: 8px 0 0 13px; }
</style>
